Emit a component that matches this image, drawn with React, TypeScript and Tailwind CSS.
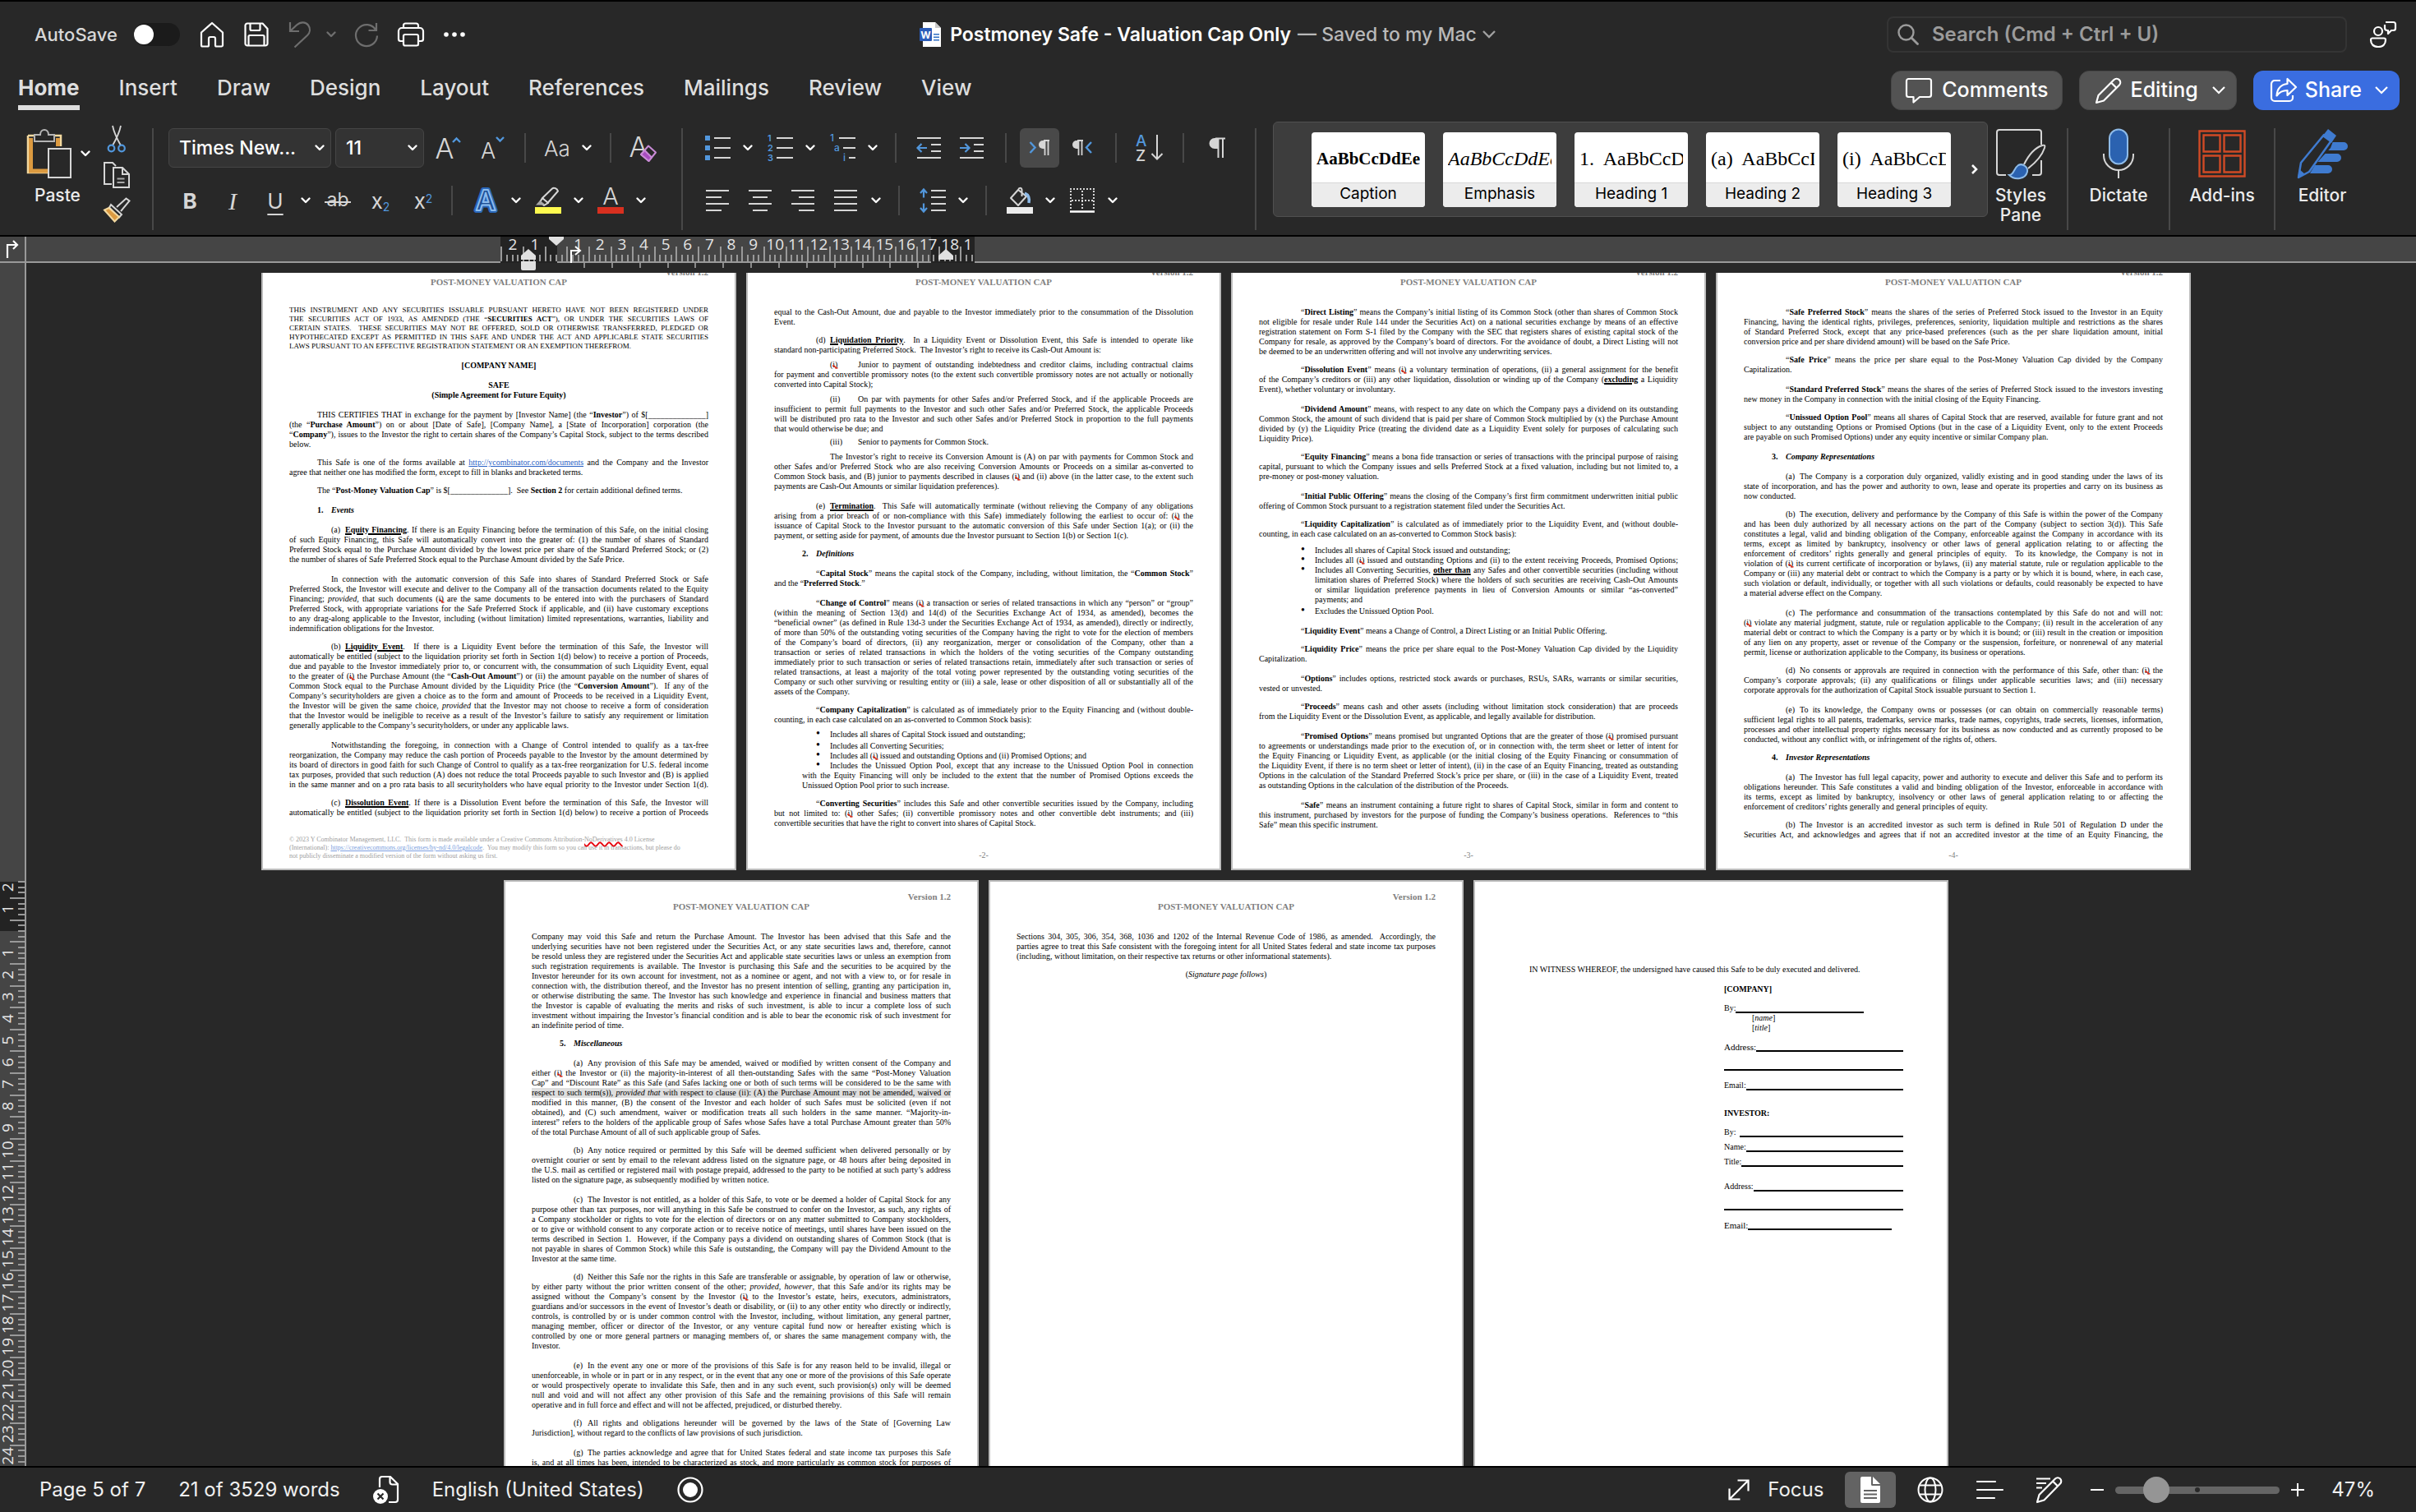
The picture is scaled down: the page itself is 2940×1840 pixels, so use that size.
import type { ReactNode } from "react";

interface Block {
  lines: string[];
  mt?: string;
  indent?: string;
  tag?: string;
  tagWidth?: string;
  center?: boolean;
  bullet?: boolean;
  hanging?: boolean;
  tight?: boolean;
  cont?: boolean;
  shaded?: number;
}

const PAGE_1: Block[] = [
  {
    mt: "-mt-[2px]",
    tight: true,
    lines: [
      "THIS INSTRUMENT AND ANY SECURITIES ISSUABLE PURSUANT HERETO HAVE NOT BEEN REGISTERED UNDER",
      "THE SECURITIES ACT OF 1933, AS AMENDED (THE “{b:SECURITIES ACT}”), OR UNDER THE SECURITIES LAWS OF",
      "CERTAIN STATES.  THESE SECURITIES MAY NOT BE OFFERED, SOLD OR OTHERWISE TRANSFERRED, PLEDGED OR",
      "HYPOTHECATED EXCEPT AS PERMITTED IN THIS SAFE AND UNDER THE ACT AND APPLICABLE STATE SECURITIES",
      "LAWS PURSUANT TO AN EFFECTIVE REGISTRATION STATEMENT OR AN EXEMPTION THEREFROM.",
    ],
  },
  { mt: "mt-3", center: true, lines: ["{b:[COMPANY NAME]}"] },
  { mt: "mt-3", center: true, lines: ["{b:SAFE}", "{b:(Simple Agreement for Future Equity)}"] },
  {
    mt: "mt-3",
    indent: "indent-[34px]",
    lines: [
      "THIS CERTIFIES THAT in exchange for the payment by [Investor Name] (the “{b:Investor}”) of $[______________]",
      "(the “{b:Purchase Amount}”) on or about [Date of Safe], [Company Name], a [State of Incorporation] corporation (the",
      "“{b:Company}”), issues to the Investor the right to certain shares of the Company’s Capital Stock, subject to the terms described",
      "below.",
    ],
  },
  {
    mt: "mt-[10px]",
    indent: "indent-[34px]",
    lines: [
      "This Safe is one of the forms available at {a:http://ycombinator.com/documents} and the Company and the Investor",
      "agree that neither one has modified the form, except to fill in blanks and bracketed terms.",
    ],
  },
  {
    mt: "mt-[10px]",
    indent: "indent-[34px]",
    lines: ["The “{b:Post-Money Valuation Cap}” is $[______________].  See {b:Section 2} for certain additional defined terms."],
  },
  { mt: "mt-3", indent: "indent-[34px]", tag: "{b:1.}", lines: ["{i:{b:Events}}"] },
  {
    mt: "mt-3",
    indent: "indent-[51px]",
    tag: "(a)",
    lines: [
      "{u:Equity Financing}. If there is an Equity Financing before the termination of this Safe, on the initial closing",
      "of such Equity Financing, this Safe will automatically convert into the greater of: (1) the number of shares of Standard",
      "Preferred Stock equal to the Purchase Amount divided by the lowest price per share of the Standard Preferred Stock; or (2)",
      "the number of shares of Safe Preferred Stock equal to the Purchase Amount divided by the Safe Price.",
    ],
  },
  {
    mt: "mt-3",
    indent: "indent-[51px]",
    lines: [
      "In connection with the automatic conversion of this Safe into shares of Standard Preferred Stock or Safe",
      "Preferred Stock, the Investor will execute and deliver to the Company all of the transaction documents related to the Equity",
      "Financing; {i:provided}, that such documents ({e:i)} are the same documents to be entered into with the purchasers of Standard",
      "Preferred Stock, with appropriate variations for the Safe Preferred Stock if applicable, and (ii) have customary exceptions",
      "to any drag-along applicable to the Investor, including (without limitation) limited representations, warranties, liability and",
      "indemnification obligations for the Investor.",
    ],
  },
  {
    mt: "mt-[10px]",
    indent: "indent-[51px]",
    tag: "(b)",
    lines: [
      "{u:Liquidity Event}.  If there is a Liquidity Event before the termination of this Safe, the Investor will",
      "automatically be entitled (subject to the liquidation priority set forth in Section 1(d) below) to receive a portion of Proceeds,",
      "due and payable to the Investor immediately prior to, or concurrent with, the consummation of such Liquidity Event, equal",
      "to the greater of ({e:i)} the Purchase Amount (the “{b:Cash-Out Amount}”) or (ii) the amount payable on the number of shares of",
      "Common Stock equal to the Purchase Amount divided by the Liquidity Price (the “{b:Conversion Amount}”).  If any of the",
      "Company’s securityholders are given a choice as to the form and amount of Proceeds to be received in a Liquidity Event,",
      "the Investor will be given the same choice, {i:provided} that the Investor may not choose to receive a form of consideration",
      "that the Investor would be ineligible to receive as a result of the Investor’s failure to satisfy any requirement or limitation",
      "generally applicable to the Company’s securityholders, or under any applicable laws.",
    ],
  },
  {
    mt: "mt-3",
    indent: "indent-[51px]",
    cont: true,
    lines: [
      "Notwithstanding the foregoing, in connection with a Change of Control intended to qualify as a tax-free",
      "reorganization, the Company may reduce the cash portion of Proceeds payable to the Investor by the amount determined by",
      "its board of directors in good faith for such Change of Control to qualify as a tax-free reorganization for U.S. federal income",
      "tax purposes, provided that such reduction (A) does not reduce the total Proceeds payable to such Investor and (B) is applied",
      "in the same manner and on a pro rata basis to all securityholders who have equal priority to the Investor under Section 1(d).",
    ],
  },
  {
    mt: "mt-[10px]",
    indent: "indent-[51px]",
    tag: "(c)",
    cont: true,
    lines: [
      "{u:Dissolution Event}. If there is a Dissolution Event before the termination of this Safe, the Investor will",
      "automatically be entitled (subject to the liquidation priority set forth in Section 1(d) below) to receive a portion of Proceeds",
    ],
  },
];

const PAGE_2: Block[] = [
  {
    lines: [
      "equal to the Cash-Out Amount, due and payable to the Investor immediately prior to the consummation of the Dissolution",
      "Event.",
    ],
  },
  {
    mt: "mt-[10px]",
    indent: "indent-[51px]",
    tag: "(d)",
    lines: [
      "{u:Liquidation Priority}.  In a Liquidity Event or Dissolution Event, this Safe is intended to operate like",
      "standard non-participating Preferred Stock.  The Investor’s right to receive its Cash-Out Amount is:",
    ],
  },
  {
    mt: "mt-[6px]",
    indent: "indent-[68px]",
    tag: "({e:i)}",
    tagWidth: "w-[34px]",
    lines: [
      "Junior to payment of outstanding indebtedness and creditor claims, including contractual claims",
      "for payment and convertible promissory notes (to the extent such convertible promissory notes are not actually or notionally",
      "converted into Capital Stock);",
    ],
  },
  {
    mt: "mt-[6px]",
    indent: "indent-[68px]",
    tag: "(ii)",
    tagWidth: "w-[34px]",
    lines: [
      "On par with payments for other Safes and/or Preferred Stock, and if the applicable Proceeds are",
      "insufficient to permit full payments to the Investor and such other Safes and/or Preferred Stock, the applicable Proceeds",
      "will be distributed pro rata to the Investor and such other Safes and/or Preferred Stock in proportion to the full payments",
      "that would otherwise be due; and",
    ],
  },
  { mt: "mt-1", indent: "indent-[68px]", tag: "(iii)", tagWidth: "w-[34px]", lines: ["Senior to payments for Common Stock."] },
  {
    mt: "mt-[6px]",
    indent: "indent-[68px]",
    lines: [
      "The Investor’s right to receive its Conversion Amount is (A) on par with payments for Common Stock and",
      "other Safes and/or Preferred Stock who are also receiving Conversion Amounts or Proceeds on a similar as-converted to",
      "Common Stock basis, and (B) junior to payments described in clauses ({e:i)} and (ii) above (in the latter case, to the extent such",
      "payments are Cash-Out Amounts or similar liquidation preferences).",
    ],
  },
  {
    mt: "mt-3",
    indent: "indent-[51px]",
    tag: "(e)",
    lines: [
      "{u:Termination}.  This Safe will automatically terminate (without relieving the Company of any obligations",
      "arising from a prior breach of or non-compliance with this Safe) immediately following the earliest to occur of: ({e:i)} the",
      "issuance of Capital Stock to the Investor pursuant to the automatic conversion of this Safe under Section 1(a); or (ii) the",
      "payment, or setting aside for payment, of amounts due the Investor pursuant to Section 1(b) or Section 1(c).",
    ],
  },
  { mt: "mt-[10px]", indent: "indent-[34px]", tag: "{b:2.}", lines: ["{i:{b:Definitions}}"] },
  {
    mt: "mt-3",
    indent: "indent-[51px]",
    lines: [
      "“{b:Capital Stock}” means the capital stock of the Company, including, without limitation, the “{b:Common Stock}”",
      "and the “{b:Preferred Stock}.”",
    ],
  },
  {
    mt: "mt-3",
    indent: "indent-[51px]",
    lines: [
      "“{b:Change of Control}” means ({e:i)} a transaction or series of related transactions in which any “person” or “group”",
      "(within the meaning of Section 13(d) and 14(d) of the Securities Exchange Act of 1934, as amended), becomes the",
      "“beneficial owner” (as defined in Rule 13d-3 under the Securities Exchange Act of 1934, as amended), directly or indirectly,",
      "of more than 50% of the outstanding voting securities of the Company having the right to vote for the election of members",
      "of the Company’s board of directors, (ii) any reorganization, merger or consolidation of the Company, other than a",
      "transaction or series of related transactions in which the holders of the voting securities of the Company outstanding",
      "immediately prior to such transaction or series of related transactions retain, immediately after such transaction or series of",
      "related transactions, at least a majority of the total voting power represented by the outstanding voting securities of the",
      "Company or such other surviving or resulting entity or (iii) a sale, lease or other disposition of all or substantially all of the",
      "assets of the Company.",
    ],
  },
  {
    mt: "mt-[10px]",
    indent: "indent-[51px]",
    lines: [
      "“{b:Company Capitalization}” is calculated as of immediately prior to the Equity Financing and (without double-",
      "counting, in each case calculated on an as-converted to Common Stock basis):",
    ],
  },
  { mt: "mt-[6px]", bullet: true, lines: ["Includes all shares of Capital Stock issued and outstanding;"] },
  { mt: "mt-[2px]", bullet: true, lines: ["Includes all Converting Securities;"] },
  { bullet: true, lines: ["Includes all ({e:i)} issued and outstanding Options and (ii) Promised Options; and"] },
  {
    bullet: true,
    lines: [
      "Includes the Unissued Option Pool, except that any increase to the Unissued Option Pool in connection",
      "with the Equity Financing will only be included to the extent that the number of Promised Options exceeds the",
      "Unissued Option Pool prior to such increase.",
    ],
  },
  {
    mt: "mt-[10px]",
    indent: "indent-[51px]",
    lines: [
      "“{b:Converting Securities}” includes this Safe and other convertible securities issued by the Company, including",
      "but not limited to: ({e:i)} other Safes; (ii) convertible promissory notes and other convertible debt instruments; and (iii)",
      "convertible securities that have the right to convert into shares of Capital Stock.",
    ],
  },
];

const PAGE_3: Block[] = [
  {
    indent: "indent-[51px]",
    lines: [
      "“{b:Direct Listing}” means the Company’s initial listing of its Common Stock (other than shares of Common Stock",
      "not eligible for resale under Rule 144 under the Securities Act) on a national securities exchange by means of an effective",
      "registration statement on Form S-1 filed by the Company with the SEC that registers shares of existing capital stock of the",
      "Company for resale, as approved by the Company’s board of directors. For the avoidance of doubt, a Direct Listing will not",
      "be deemed to be an underwritten offering and will not involve any underwriting services.",
    ],
  },
  {
    mt: "mt-[10px]",
    indent: "indent-[51px]",
    lines: [
      "“{b:Dissolution Event}” means ({e:i)} a voluntary termination of operations, (ii) a general assignment for the benefit",
      "of the Company’s creditors or (iii) any other liquidation, dissolution or winding up of the Company ({u:excluding} a Liquidity",
      "Event), whether voluntary or involuntary.",
    ],
  },
  {
    mt: "mt-3",
    indent: "indent-[51px]",
    lines: [
      "“{b:Dividend Amount}” means, with respect to any date on which the Company pays a dividend on its outstanding",
      "Common Stock, the amount of such dividend that is paid per share of Common Stock multiplied by (x) the Purchase Amount",
      "divided by (y) the Liquidity Price (treating the dividend date as a Liquidity Event solely for purposes of calculating such",
      "Liquidity Price).",
    ],
  },
  {
    mt: "mt-[10px]",
    indent: "indent-[51px]",
    lines: [
      "“{b:Equity Financing}” means a bona fide transaction or series of transactions with the principal purpose of raising",
      "capital, pursuant to which the Company issues and sells Preferred Stock at a fixed valuation, including but not limited to, a",
      "pre-money or post-money valuation.",
    ],
  },
  {
    mt: "mt-3",
    indent: "indent-[51px]",
    lines: [
      "“{b:Initial Public Offering}” means the closing of the Company’s first firm commitment underwritten initial public",
      "offering of Common Stock pursuant to a registration statement filed under the Securities Act.",
    ],
  },
  {
    mt: "mt-[10px]",
    indent: "indent-[51px]",
    lines: [
      "“{b:Liquidity Capitalization}” is calculated as of immediately prior to the Liquidity Event, and (without double-",
      "counting, in each case calculated on an as-converted to Common Stock basis):",
    ],
  },
  { mt: "mt-2", bullet: true, hanging: true, lines: ["Includes all shares of Capital Stock issued and outstanding;"] },
  {
    bullet: true,
    hanging: true,
    cont: true,
    lines: ["Includes all ({e:i)} issued and outstanding Options and (ii) to the extent receiving Proceeds, Promised Options;"],
  },
  {
    bullet: true,
    hanging: true,
    lines: [
      "Includes all Converting Securities, {u:other than} any Safes and other convertible securities (including without",
      "limitation shares of Preferred Stock) where the holders of such securities are receiving Cash-Out Amounts",
      "or similar liquidation preference payments in lieu of Conversion Amounts or similar “as-converted”",
      "payments; and",
    ],
  },
  { mt: "mt-[2px]", bullet: true, hanging: true, lines: ["Excludes the Unissued Option Pool."] },
  {
    mt: "mt-3",
    indent: "indent-[51px]",
    lines: ["“{b:Liquidity Event}” means a Change of Control, a Direct Listing or an Initial Public Offering."],
  },
  {
    mt: "mt-[10px]",
    indent: "indent-[51px]",
    lines: [
      "“{b:Liquidity Price}” means the price per share equal to the Post-Money Valuation Cap divided by the Liquidity",
      "Capitalization.",
    ],
  },
  {
    mt: "mt-3",
    indent: "indent-[51px]",
    lines: [
      "“{b:Options}” includes options, restricted stock awards or purchases, RSUs, SARs, warrants or similar securities,",
      "vested or unvested.",
    ],
  },
  {
    mt: "mt-[10px]",
    indent: "indent-[51px]",
    lines: [
      "“{b:Proceeds}” means cash and other assets (including without limitation stock consideration) that are proceeds",
      "from the Liquidity Event or the Dissolution Event, as applicable, and legally available for distribution.",
    ],
  },
  {
    mt: "mt-3",
    indent: "indent-[51px]",
    lines: [
      "“{b:Promised Options}” means promised but ungranted Options that are the greater of those ({e:i)} promised pursuant",
      "to agreements or understandings made prior to the execution of, or in connection with, the term sheet or letter of intent for",
      "the Equity Financing or Liquidity Event, as applicable (or the initial closing of the Equity Financing or consummation of",
      "the Liquidity Event, if there is no term sheet or letter of intent), (ii) in the case of an Equity Financing, treated as outstanding",
      "Options in the calculation of the Standard Preferred Stock’s price per share, or (iii) in the case of a Liquidity Event, treated",
      "as outstanding Options in the calculation of the distribution of the Proceeds.",
    ],
  },
  {
    mt: "mt-3",
    indent: "indent-[51px]",
    lines: [
      "“{b:Safe}” means an instrument containing a future right to shares of Capital Stock, similar in form and content to",
      "this instrument, purchased by investors for the purpose of funding the Company’s business operations.  References to “this",
      "Safe” mean this specific instrument.",
    ],
  },
];

const PAGE_4: Block[] = [
  {
    indent: "indent-[51px]",
    lines: [
      "“{b:Safe Preferred Stock}” means the shares of the series of Preferred Stock issued to the Investor in an Equity",
      "Financing, having the identical rights, privileges, preferences, seniority, liquidation multiple and restrictions as the shares",
      "of Standard Preferred Stock, except that any price-based preferences (such as the per share liquidation amount, initial",
      "conversion price and per share dividend amount) will be based on the Safe Price.",
    ],
  },
  {
    mt: "mt-[10px]",
    indent: "indent-[51px]",
    lines: [
      "“{b:Safe Price}” means the price per share equal to the Post-Money Valuation Cap divided by the Company",
      "Capitalization.",
    ],
  },
  {
    mt: "mt-3",
    indent: "indent-[51px]",
    lines: [
      "“{b:Standard Preferred Stock}” means the shares of the series of Preferred Stock issued to the investors investing",
      "new money in the Company in connection with the initial closing of the Equity Financing.",
    ],
  },
  {
    mt: "mt-[10px]",
    indent: "indent-[51px]",
    lines: [
      "“{b:Unissued Option Pool}” means all shares of Capital Stock that are reserved, available for future grant and not",
      "subject to any outstanding Options or Promised Options (but in the case of a Liquidity Event, only to the extent Proceeds",
      "are payable on such Promised Options) under any equity incentive or similar Company plan.",
    ],
  },
  { mt: "mt-3", indent: "indent-[34px]", tag: "{b:3.}", lines: ["{i:{b:Company Representations}}"] },
  {
    mt: "mt-3",
    indent: "indent-[51px]",
    tag: "(a)",
    lines: [
      "The Company is a corporation duly organized, validly existing and in good standing under the laws of its",
      "state of incorporation, and has the power and authority to own, lease and operate its properties and carry on its business as",
      "now conducted.",
    ],
  },
  {
    mt: "mt-[10px]",
    indent: "indent-[51px]",
    tag: "(b)",
    lines: [
      "The execution, delivery and performance by the Company of this Safe is within the power of the Company",
      "and has been duly authorized by all necessary actions on the part of the Company (subject to section 3(d)). This Safe",
      "constitutes a legal, valid and binding obligation of the Company, enforceable against the Company in accordance with its",
      "terms, except as limited by bankruptcy, insolvency or other laws of general application relating to or affecting the",
      "enforcement of creditors’ rights generally and general principles of equity.  To its knowledge, the Company is not in",
      "violation of ({e:i)} its current certificate of incorporation or bylaws, (ii) any material statute, rule or regulation applicable to the",
      "Company or (iii) any material debt or contract to which the Company is a party or by which it is bound, where, in each case,",
      "such violation or default, individually, or together with all such violations or defaults, could reasonably be expected to have",
      "a material adverse effect on the Company.",
    ],
  },
  {
    mt: "mt-3",
    indent: "indent-[51px]",
    tag: "(c)",
    lines: [
      "The performance and consummation of the transactions contemplated by this Safe do not and will not:",
      "({e:i)} violate any material judgment, statute, rule or regulation applicable to the Company; (ii) result in the acceleration of any",
      "material debt or contract to which the Company is a party or by which it is bound; or (iii) result in the creation or imposition",
      "of any lien on any property, asset or revenue of the Company or the suspension, forfeiture, or nonrenewal of any material",
      "permit, license or authorization applicable to the Company, its business or operations.",
    ],
  },
  {
    mt: "mt-[10px]",
    indent: "indent-[51px]",
    tag: "(d)",
    lines: [
      "No consents or approvals are required in connection with the performance of this Safe, other than: ({e:i)} the",
      "Company’s corporate approvals; (ii) any qualifications or filings under applicable securities laws; and (iii) necessary",
      "corporate approvals for the authorization of Capital Stock issuable pursuant to Section 1.",
    ],
  },
  {
    mt: "mt-3",
    indent: "indent-[51px]",
    tag: "(e)",
    lines: [
      "To its knowledge, the Company owns or possesses (or can obtain on commercially reasonable terms)",
      "sufficient legal rights to all patents, trademarks, service marks, trade names, copyrights, trade secrets, licenses, information,",
      "processes and other intellectual property rights necessary for its business as now conducted and as currently proposed to be",
      "conducted, without any conflict with, or infringement of the rights of, others.",
    ],
  },
  { mt: "mt-[10px]", indent: "indent-[34px]", tag: "{b:4.}", lines: ["{i:{b:Investor Representations}}"] },
  {
    mt: "mt-3",
    indent: "indent-[51px]",
    tag: "(a)",
    lines: [
      "The Investor has full legal capacity, power and authority to execute and deliver this Safe and to perform its",
      "obligations hereunder. This Safe constitutes a valid and binding obligation of the Investor, enforceable in accordance with",
      "its terms, except as limited by bankruptcy, insolvency or other laws of general application relating to or affecting the",
      "enforcement of creditors’ rights generally and general principles of equity.",
    ],
  },
  {
    mt: "mt-[10px]",
    indent: "indent-[51px]",
    tag: "(b)",
    cont: true,
    lines: [
      "The Investor is an accredited investor as such term is defined in Rule 501 of Regulation D under the",
      "Securities Act, and acknowledges and agrees that if not an accredited investor at the time of an Equity Financing, the",
    ],
  },
];

const PAGE_5: Block[] = [
  {
    lines: [
      "Company may void this Safe and return the Purchase Amount. The Investor has been advised that this Safe and the",
      "underlying securities have not been registered under the Securities Act, or any state securities laws and, therefore, cannot",
      "be resold unless they are registered under the Securities Act and applicable state securities laws or unless an exemption from",
      "such registration requirements is available. The Investor is purchasing this Safe and the securities to be acquired by the",
      "Investor hereunder for its own account for investment, not as a nominee or agent, and not with a view to, or for resale in",
      "connection with, the distribution thereof, and the Investor has no present intention of selling, granting any participation in,",
      "or otherwise distributing the same. The Investor has such knowledge and experience in financial and business matters that",
      "the Investor is capable of evaluating the merits and risks of such investment, is able to incur a complete loss of such",
      "investment without impairing the Investor’s financial condition and is able to bear the economic risk of such investment for",
      "an indefinite period of time.",
    ],
  },
  { mt: "mt-[10px]", indent: "indent-[34px]", tag: "{b:5.}", lines: ["{i:{b:Miscellaneous}}"] },
  {
    mt: "mt-3",
    indent: "indent-[51px]",
    tag: "(a)",
    shaded: 3,
    lines: [
      "Any provision of this Safe may be amended, waived or modified by written consent of the Company and",
      "either ({e:i)} the Investor or (ii) the majority-in-interest of all then-outstanding Safes with the same “Post-Money Valuation",
      "Cap” and “Discount Rate” as this Safe (and Safes lacking one or both of such terms will be considered to be the same with",
      "respect to such term(s)), {i:provided that} with respect to clause (ii): (A) the Purchase Amount may not be amended, waived or",
      "modified in this manner, (B) the consent of the Investor and each holder of such Safes must be solicited (even if not",
      "obtained), and (C) such amendment, waiver or modification treats all such holders in the same manner. “Majority-in-",
      "interest” refers to the holders of the applicable group of Safes whose Safes have a total Purchase Amount greater than 50%",
      "of the total Purchase Amount of all of such applicable group of Safes.",
    ],
  },
  {
    mt: "mt-[10px]",
    indent: "indent-[51px]",
    tag: "(b)",
    lines: [
      "Any notice required or permitted by this Safe will be deemed sufficient when delivered personally or by",
      "overnight courier or sent by email to the relevant address listed on the signature page, or 48 hours after being deposited in",
      "the U.S. mail as certified or registered mail with postage prepaid, addressed to the party to be notified at such party’s address",
      "listed on the signature page, as subsequently modified by written notice.",
    ],
  },
  {
    mt: "mt-3",
    indent: "indent-[51px]",
    tag: "(c)",
    lines: [
      "The Investor is not entitled, as a holder of this Safe, to vote or be deemed a holder of Capital Stock for any",
      "purpose other than tax purposes, nor will anything in this Safe be construed to confer on the Investor, as such, any rights of",
      "a Company stockholder or rights to vote for the election of directors or on any matter submitted to Company stockholders,",
      "or to give or withhold consent to any corporate action or to receive notice of meetings, until shares have been issued on the",
      "terms described in Section 1.  However, if the Company pays a dividend on outstanding shares of Common Stock (that is",
      "not payable in shares of Common Stock) while this Safe is outstanding, the Company will pay the Dividend Amount to the",
      "Investor at the same time.",
    ],
  },
  {
    mt: "mt-[10px]",
    indent: "indent-[51px]",
    tag: "(d)",
    lines: [
      "Neither this Safe nor the rights in this Safe are transferable or assignable, by operation of law or otherwise,",
      "by either party without the prior written consent of the other; {i:provided, however}, that this Safe and/or its rights may be",
      "assigned without the Company’s consent by the Investor ({e:i)} to the Investor’s estate, heirs, executors, administrators,",
      "guardians and/or successors in the event of Investor’s death or disability, or (ii) to any other entity who directly or indirectly,",
      "controls, is controlled by or is under common control with the Investor, including, without limitation, any general partner,",
      "managing member, officer or director of the Investor, or any venture capital fund now or hereafter existing which is",
      "controlled by one or more general partners or managing members of, or shares the same management company with, the",
      "Investor.",
    ],
  },
  {
    mt: "mt-3",
    indent: "indent-[51px]",
    tag: "(e)",
    lines: [
      "In the event any one or more of the provisions of this Safe is for any reason held to be invalid, illegal or",
      "unenforceable, in whole or in part or in any respect, or in the event that any one or more of the provisions of this Safe operate",
      "or would prospectively operate to invalidate this Safe, then and in any such event, such provision(s) only will be deemed",
      "null and void and will not affect any other provision of this Safe and the remaining provisions of this Safe will remain",
      "operative and in full force and effect and will not be affected, prejudiced, or disturbed thereby.",
    ],
  },
  {
    mt: "mt-[10px]",
    indent: "indent-[51px]",
    tag: "(f)",
    lines: [
      "All rights and obligations hereunder will be governed by the laws of the State of [Governing Law",
      "Jurisdiction], without regard to the conflicts of law provisions of such jurisdiction.",
    ],
  },
  {
    mt: "mt-3",
    indent: "indent-[51px]",
    tag: "(g)",
    cont: true,
    lines: [
      "The parties acknowledge and agree that for United States federal and state income tax purposes this Safe",
      "is, and at all times has been, intended to be characterized as stock, and more particularly as common stock for purposes of",
    ],
  },
];

const PAGE_6: Block[] = [
  {
    lines: [
      "Sections 304, 305, 306, 354, 368, 1036 and 1202 of the Internal Revenue Code of 1986, as amended.  Accordingly, the",
      "parties agree to treat this Safe consistent with the foregoing intent for all United States federal and state income tax purposes",
      "(including, without limitation, on their respective tax returns or other informational statements).",
    ],
  },
  { mt: "mt-[10px]", center: true, lines: ["({i:Signature page follows})"] },
];

// {b:bold} {i:italic} {u:bold underlined} {e:proofing mark} {a:link}
function rich(text: string): ReactNode[] {
  return text.split(/(\{\w:(?:\{\w:[^}]*\}|[^{}])*\})/).map((part, i) => {
    const m = part.match(/^\{(\w):(.*)\}$/);
    if (!m) return part.replace(/ {2}/g, "\u00a0 ");
    const inner = rich(m[2]);
    switch (m[1]) {
      case "b":
        return <b key={i}>{inner}</b>;
      case "i":
        return <i key={i}>{inner}</i>;
      case "u":
        return <b key={i} className="underline decoration-2 underline-offset-1">{inner}</b>;
      case "e":
        return (
          <span key={i} className="relative">
            {inner}
            <svg width="7" height="5" viewBox="0 0 7 5" className="absolute bottom-0 left-0" aria-hidden="true">
              <path d="M0 1l2 .2L4.500 4l2-.2" stroke="#dc2a1c" strokeWidth="1.600" fill="none" />
            </svg>
          </span>
        );
      default:
        return <a key={i} href={m[2]} className="text-[#2b63c6] underline">{inner}</a>;
    }
  });
}

function Paragraph({ block }: { block: Block }) {
  const { lines, mt = "", indent = "", tag, tagWidth = "w-[17px]", center, bullet, hanging, tight, cont, shaded } = block;
  const pad = bullet ? (hanging ? "pl-[68px]" : "pl-[34px]") : "";
  return (
    <p className={`${mt} ${pad} ${tight ? "text-[9px] leading-[11px]" : ""} ${center ? "text-center" : ""}`}>
      {lines.map((line, i) => {
        const justify = !center && (cont || i < lines.length - 1);
        return (
          <span
            key={i}
            className={`block whitespace-nowrap ${i === 0 ? indent : ""} ${justify ? "text-justify [text-align-last:justify]" : ""} ${shaded === i ? "bg-[#dedede]" : ""}`}
          >
            {bullet && i === 0 && (
              <span className={`inline-block w-[17px] text-left text-[14px] leading-[10px] [text-align-last:left] ${hanging ? "-ml-[17px]" : "ml-[17px]"}`}>•</span>
            )}
            {tag && i === 0 && <span className={`inline-block indent-0 text-left [text-align-last:left] ${tagWidth}`}>{rich(tag)}</span>}
            {rich(line)}
          </span>
        );
      })}
    </p>
  );
}

function Page({ blocks, footer, children }: { blocks?: Block[]; footer?: ReactNode; children?: ReactNode }) {
  return (
    <article className="flex min-h-[748px] w-[578px] shrink-0 flex-col border-2 border-[#bcbcbc] bg-white px-8 pt-3 pb-[10px] font-['Liberation_Serif',serif] text-[10px] leading-[12px] text-black">
      {blocks && (
        <>
          <header className="mb-[25px] text-[11px] font-bold text-[#808080]">
            <p className="text-right">Version 1.2</p>
            <p className="text-center">POST-MONEY VALUATION CAP</p>
          </header>
          {blocks.map((b, i) => (
            <Paragraph key={i} block={b} />
          ))}
        </>
      )}
      {children}
      {footer && <footer className="mt-auto text-center text-[#808080]">{footer}</footer>}
    </article>
  );
}

function Blank({ label, mt, big, width = "w-full" }: { label?: string; mt: string; big?: boolean; width?: string }) {
  return (
    <div className={`flex h-3 items-end ${mt} ${width}`}>
      {label && <span className={big ? "text-[11px]" : ""}>{label}</span>}
      <span className="flex-1 border-b-2 border-black" />
    </div>
  );
}

function SignaturePage() {
  return (
    <Page>
      <p className="mt-[89px] pl-[34px]">IN WITNESS WHEREOF, the undersigned have caused this Safe to be duly executed and delivered.</p>
      <div className="ml-[271px] w-[218px]">
        <p className="mt-3 font-bold">[COMPANY]</p>
        <Blank label="By:" mt="mt-[11px]" width="w-[170px]" />
        <p className="pl-[34px]">[<i>name</i>]</p>
        <p className="pl-[34px]">[<i>title</i>]</p>
        <Blank label="Address:" mt="mt-[11px]" big />
        <Blank mt="mt-[11px]" />
        <Blank label="Email:" mt="mt-3" />
        <p className="mt-[22px] font-bold">INVESTOR:</p>
        <Blank label={"By:\u00a0\u00a0"} mt="mt-[11px]" />
        <Blank label="Name:" mt="mt-[6px]" />
        <Blank label="Title:" mt="mt-[6px]" />
        <Blank label="Address:" mt="mt-[18px]" />
        <Blank mt="mt-[11px]" />
        <Blank label="Email:" mt="mt-3" big width="w-[204px]" />
      </div>
    </Page>
  );
}

/* ---------- icons ---------- */

interface IconProps {
  w: number;
  h: number;
  children: ReactNode;
  className?: string;
}

function Icon({ w, h, children, className = "" }: IconProps) {
  return (
    <svg width={w} height={h} viewBox={`0 0 ${w} ${h}`} fill="none" stroke="#d6d6d6" strokeWidth="2" className={`shrink-0 overflow-visible ${className}`} aria-hidden="true">
      {children}
    </svg>
  );
}

const BLUE = "#5297dc";

function Chevron({ className = "", color = "#ffffff" }: { className?: string; color?: string }) {
  return (
    <Icon w={12} h={8} className={className}>
      <path d="M1.5 1.5 6 6l4.500-4.500" stroke={color} strokeWidth="2.400" strokeLinecap="round" strokeLinejoin="round" />
    </Icon>
  );
}

function Lines({ rows }: { rows: [number, number][] }) {
  return (
    <Icon w={28} h={28}>
      {rows.map(([x1, x2], i) => (
        <path key={i} d={`M${x1} ${2 + i * 8}H${x2}`} />
      ))}
    </Icon>
  );
}

const HomeIcon = () => (
  <Icon w={30} h={32}>
    <path d="M2 13.500 15 2l13 11.500V29a1.500 1.500 0 0 1-1.500 1.500H20.500A1.500 1.500 0 0 1 19 29v-8a2 2 0 0 0-2-2h-4a2 2 0 0 0-2 2v8a1.500 1.500 0 0 1-1.500 1.500H3.500A1.500 1.500 0 0 1 2 29Z" stroke="#fff" strokeWidth="2.200" strokeLinejoin="round" />
  </Icon>
);

const SaveIcon = () => (
  <Icon w={30} h={30}>
    <g stroke="#fff" strokeWidth="2.200" strokeLinejoin="round">
      <path d="M4 1.500h18.500L28.500 8v18a2.500 2.500 0 0 1-2.500 2.500H4A2.500 2.500 0 0 1 1.500 26V4A2.500 2.500 0 0 1 4 1.500Z" />
      <path d="M7.500 2v6.500A1.500 1.500 0 0 0 9 10h9a1.500 1.500 0 0 0 1.500-1.500V2M5.500 28V17.500A1.500 1.500 0 0 1 7 16h16a1.500 1.500 0 0 1 1.500 1.500V28" />
    </g>
  </Icon>
);

const UndoIcon = () => (
  <Icon w={28} h={34}>
    <path d="M2 2v11h11M2.500 12.500 10 5.500C15 1 21 1.500 24 5.500c3 4 2.500 9-1 12.500L7.500 32.500" stroke="#6e6e6e" strokeWidth="2.200" />
  </Icon>
);

const RedoIcon = () => (
  <Icon w={30} h={32}>
    <path d="M27 2v9H17.500M26.500 11A13 13 0 1 0 28 17.500" stroke="#6e6e6e" strokeWidth="2.200" />
  </Icon>
);

const PrintIcon = () => (
  <Icon w={34} h={30}>
    <g stroke="#fff" strokeWidth="2.200" strokeLinejoin="round">
      <path d="M8 8V4a2.500 2.500 0 0 1 2.500-2.500h13A2.500 2.500 0 0 1 26 4v4" />
      <path d="M8 23H4.500A2.500 2.500 0 0 1 2 20.500V11a4 4 0 0 1 4-4h22a4 4 0 0 1 4 4v9.500A2.500 2.500 0 0 1 29.500 23H26" />
      <path d="M10 15h14a2 2 0 0 1 2 2v9.500a2 2 0 0 1-2 2H10a2 2 0 0 1-2-2V17a2 2 0 0 1 2-2Z" />
    </g>
  </Icon>
);

const DotsIcon = () => (
  <Icon w={28} h={8}>
    <g fill="#fff" stroke="none">
      <circle cx="4" cy="4" r="2.800" />
      <circle cx="14" cy="4" r="2.800" />
      <circle cx="24" cy="4" r="2.800" />
    </g>
  </Icon>
);

const WordDocIcon = () => (
  <Icon w={27} h={30}>
    <g stroke="none">
      <path d="M4 0h15l7 7v23H4Z" fill="#fff" />
      <path d="M19 0l7 7h-7Z" fill="#c9c9c9" />
      <path d="M17 14h7v1.500h-7zM17 17.500h7V19h-7zM17 21h7v1.500h-7z" fill="#2f6fc4" />
      <rect x="0" y="7" width="15" height="16" rx="1" fill="#2b5cb8" />
      <text x="7.500" y="19.500" textAnchor="middle" fontSize="12" fontWeight="700" fontFamily="Inter, sans-serif" fill="#fff">W</text>
    </g>
  </Icon>
);

const SearchIcon = () => (
  <Icon w={26} h={26}>
    <circle cx="10.500" cy="10.500" r="9" stroke="#9b9b9b" strokeWidth="2.400" />
    <path d="m17 17 7.500 7.500" stroke="#9b9b9b" strokeWidth="2.800" strokeLinecap="round" />
  </Icon>
);

const PersonIcon = () => (
  <Icon w={34} h={34}>
    <g stroke="#fff" strokeWidth="2.200" strokeLinejoin="round">
      <circle cx="11" cy="13" r="5" />
      <path d="M3.500 21.500h14.500a2 2 0 0 1 2 2c0 5-3 8.500-9 8.500s-9-3.500-9-8.500a2 2 0 0 1 1.500-2Z" />
      <path d="M20 2h9.500A2.500 2.500 0 0 1 32 4.500v5a2.500 2.500 0 0 1-2.500 2.500H27l-4 4v-4h-1a3 3 0 0 1-3-3V5" />
    </g>
  </Icon>
);

const CommentIcon = () => (
  <Icon w={34} h={32}>
    <path d="M4.500 2h25A2.500 2.500 0 0 1 32 4.500v17a2.500 2.500 0 0 1-2.500 2.500H18l-7.500 6.500V24h-6A2.500 2.500 0 0 1 2 21.500v-17A2.500 2.500 0 0 1 4.500 2Z" stroke="#fff" strokeWidth="2.200" strokeLinejoin="round" />
  </Icon>
);

const PencilIcon = () => (
  <Icon w={34} h={34}>
    <path d="m2 32 2.500-9L23.500 4a4.600 4.600 0 0 1 6.500 6.500L11 29.500Zm18-24.500 6.500 6.500" stroke="#fff" strokeWidth="2.200" strokeLinejoin="round" />
  </Icon>
);

const ShareIcon = () => (
  <Icon w={34} h={32}>
    <g stroke="#fff" strokeWidth="2.200" strokeLinejoin="round">
      <path d="M13 4H6a4 4 0 0 0-4 4v17a4 4 0 0 0 4 4h18a4 4 0 0 0 4-4v-3" />
      <path d="M21.500 2v6C13 9 9 14 8.500 22.500 12 17.500 16 16 21.500 16v6L32 12Z" />
    </g>
  </Icon>
);

const PasteIcon = () => (
  <Icon w={56} h={62}>
    <path d="M2 9h40v13M26 54H2V9" stroke="#f3d9a0" strokeWidth="2.500" />
    <path d="M5.500 12v40H26M38.500 12v10" stroke="#dc9a40" strokeWidth="5" />
    <path d="M10 16V8h7c0-8 10-8 10 0h7v8Z" fill="#282828" stroke="#b4b4b4" />
    <rect x="27" y="25" width="27" height="35" fill="#282828" stroke="#d6d6d6" />
  </Icon>
);

const CutIcon = () => (
  <Icon w={24} h={34}>
    <path d="M7 1c2 10 6 17 10 24M17 1C15 11 11 18 7 25" strokeWidth="1.800" />
    <circle cx="5.500" cy="28.500" r="3.800" stroke={BLUE} strokeWidth="2.200" />
    <circle cx="18" cy="28.500" r="3.800" stroke={BLUE} strokeWidth="2.200" />
  </Icon>
);

const CopyIcon = () => (
  <Icon w={34} h={34}>
    <path d="M11 28H2V2h10l4 4M13 8h11l8 8v16H13ZM24 8v8h8" />
    <path d="M17.500 21.500h9M17.500 26h9" stroke="#a8a8a8" />
  </Icon>
);

const BrushIcon = () => (
  <Icon w={34} h={32}>
    <path d="M17 12 28.500 1.500l4 3L22 17" />
    <path d="m10 9 13 12-3 3.500L8 12.500Z" fill="#282828" />
    <path d="M7.500 13 2 15.500l12.500 14L20 24Z" fill="#dc9a40" stroke="#f3d9a0" />
  </Icon>
);

const GrowIcon = ({ down = false }: { down?: boolean }) => (
  <Icon w={31} h={32}>
    <g stroke="none" fill="#d6d6d6">
      <text x={down ? 9 : 11} y="29" textAnchor="middle" fontSize={down ? 27 : 34} fontWeight="300" fontFamily="Inter, sans-serif">A</text>
    </g>
    <path d={down ? "m19 3 4.500 4.500L28 3" : "m21 9 4.500-4.500L30 9"} stroke={BLUE} strokeWidth="2.400" />
  </Icon>
);

const ClearFormatIcon = () => (
  <Icon w={34} h={36}>
    <text x="11" y="29" textAnchor="middle" fontSize="34" fontWeight="300" fontFamily="Inter, sans-serif" fill="#d6d6d6" stroke="none">A</text>
    <path d="m14 26 9-10.500 9 8L23.500 34Z" fill="#282828" stroke="#c98bd6" strokeLinejoin="round" />
    <path d="m14 26 4.500-5 8.500 8.500-3.500 4.500Z" fill="#a84cc0" stroke="#c98bd6" strokeLinejoin="round" />
  </Icon>
);

const BulletsIcon = () => (
  <Icon w={31} h={30}>
    <path d="M0 3h6M0 15h6M0 27h6" stroke={BLUE} strokeWidth="6" />
    <path d="M11 3h20M11 15h20M11 27h20" />
  </Icon>
);

const NumberedIcon = () => (
  <Icon w={31} h={34}>
    <g stroke="none" fill={BLUE} fontSize="11" fontWeight="600" fontFamily="Inter, sans-serif">
      <text x="0" y="9">1</text>
      <text x="0" y="21">2</text>
      <text x="0" y="33">3</text>
    </g>
    <path d="M11 5h20M11 17h20M11 29h20" />
  </Icon>
);

const MultilevelIcon = () => (
  <Icon w={31} h={34}>
    <g stroke="none" fill={BLUE} fontSize="12" fontWeight="500" fontFamily="Inter, sans-serif">
      <text x="0" y="9">1</text>
      <text x="5" y="21">a</text>
      <text x="16" y="33">i</text>
    </g>
    <path d="M11 5h20M16 17h15M23 29h8" />
  </Icon>
);

const IndentIcon = ({ right = false }: { right?: boolean }) => (
  <Icon w={30} h={28}>
    <path d="M0 2h29M17 10h12M17 18h12M0 26h29" />
    <path d={right ? "M0 14h11M6.500 9l5 5-5 5" : "M12 14H1M5.500 9l-5 5 5 5"} stroke={BLUE} strokeWidth="2.200" />
  </Icon>
);

const DirectionIcon = ({ rtl = false }: { rtl?: boolean }) => (
  <Icon w={26} h={24}>
    <path d={rtl ? "M24 5l-6 6.500 6 6.500" : "M1.500 5l6 6.500-6 6.500"} stroke={BLUE} strokeWidth="2.400" />
    <g transform={rtl ? "translate(-11 0)" : ""}>
      <path d="M18 3h7M19.500 3v18M23.500 3v18" strokeWidth="1.800" />
      <path d="M19 3h-2a5 5 0 0 0 0 10h2Z" fill="#d6d6d6" stroke="none" />
    </g>
  </Icon>
);

const SortIcon = () => (
  <Icon w={34} h={36}>
    <g stroke="none" fontSize="19" fontWeight="500" fontFamily="Inter, sans-serif">
      <text x="0" y="16" fill={BLUE}>A</text>
      <text x="0" y="34" fill="#d6d6d6">Z</text>
    </g>
    <path d="M26 2v29M19.500 25l6.500 6.500 6.500-6.500" />
  </Icon>
);

const PilcrowIcon = () => (
  <Icon w={22} h={26}>
    <path d="M9 1.500h12M12.500 1.500V25M18 1.500V25" />
    <path d="M12 1H8a6.500 6.500 0 0 0 0 13h4Z" fill="#d6d6d6" stroke="none" />
  </Icon>
);

const StrikeIcon = () => (
  <Icon w={34} h={26}>
    <text x="17" y="20" textAnchor="middle" fontSize="23" fontFamily="Inter, sans-serif" fill="#d6d6d6" stroke="none">ab</text>
    <path d="M1 15h32" />
  </Icon>
);

const TextEffectsIcon = () => (
  <Icon w={34} h={34}>
    <g fontFamily="Inter, sans-serif" fontSize="34" fontWeight="600" strokeLinejoin="round">
      <text x="17" y="29" textAnchor="middle" stroke="#2a67b8" strokeWidth="6" paintOrder="stroke" fill="#7fb2e8">A</text>
      <text x="17" y="29" textAnchor="middle" stroke="#8cbcee" strokeWidth="2" fill="#1f4f94">A</text>
    </g>
  </Icon>
);

const HighlightIcon = () => (
  <Icon w={34} h={34}>
    <path d="M10 14 22 2.500c2-2 6 0 7 3L16.500 20" strokeLinejoin="round" />
    <path d="m10 14-3 5 5 4 5-3Z" strokeLinejoin="round" />
    <path d="m7 17-5 5.500h9l2-1Z" fill="#a8a8a8" stroke="none" />
    <rect x="1" y="25" width="32" height="8" fill="#fdf94f" stroke="none" />
  </Icon>
);

const FontColorIcon = () => (
  <Icon w={34} h={34}>
    <text x="17" y="22" textAnchor="middle" fontSize="29" fontWeight="300" fontFamily="Inter, sans-serif" fill="#d6d6d6" stroke="none">A</text>
    <rect x="1" y="25" width="32" height="8" fill="#d8301f" stroke="none" />
  </Icon>
);

const LineSpacingIcon = () => (
  <Icon w={32} h={30}>
    <path d="M14 3h18M14 11h18M14 19h18M14 27h18" />
    <path d="M5 1.500v10M1 6l4-4.500L9 6M5 18.500v10M1 24l4 4.500L9 24" stroke={BLUE} strokeWidth="2.200" />
  </Icon>
);

const FillIcon = () => (
  <Icon w={34} h={34}>
    <path d="M15 4 6 14l9 9L25 12Zm0 0c1-3 4-3 4.500 0v8" strokeLinejoin="round" />
    <path d="M23 8c5 2 6 6 5 12" stroke="#8ebbe8" strokeWidth="3.500" />
    <rect x="1" y="25" width="32" height="8" fill="#ececec" stroke="none" />
  </Icon>
);

const BordersIcon = () => (
  <Icon w={32} h={32}>
    <path d="M1 2h30M2 4v24M30 4v24M16 4v24M3 16h26" strokeDasharray="2 2" />
    <path d="M1 29.500h30" stroke="#fff" strokeWidth="2.500" />
  </Icon>
);

const StylesPaneIcon = () => (
  <Icon w={62} h={62}>
    <path d="M45 57h8a3 3 0 0 0 3-3V39M56 20V5a3 3 0 0 0-3-3H5a3 3 0 0 0-3 3v49a3 3 0 0 0 3 3h8" />
    <path d="M35 44c5-10 13-20 22-23 3-1 4 0 3 3-3 9-11 18-20 25" fill="#282828" />
    <path d="M17 57c6 0 5-8 11-12 6-3 12 3 11 8-2 9-15 11-22 4Z" fill="#2b62b0" stroke="#8ebbe8" />
  </Icon>
);

const MicIcon = () => (
  <Icon w={40} h={62}>
    <path d="M2 31v2a18 18 0 0 0 36 0v-2M20 51v10" />
    <rect x="9" y="1.500" width="22" height="42" rx="11" fill="#2b62b0" stroke="#8ebbe8" />
  </Icon>
);

const AddInsIcon = () => (
  <Icon w={58} h={58}>
    <g stroke="#d04a25" strokeWidth="2.400">
      <path d="M1.500 1.500h55v55h-55Z" />
      <path d="M6.500 6.500h20v20h-20ZM31.500 6.500h20v20h-20ZM6.500 31.500h20v20h-20ZM31.500 31.500h20v20h-20Z" />
    </g>
  </Icon>
);

const EditorIcon = () => (
  <Icon w={62} h={62}>
    <path d="m35 17h22a5 5 0 0 1 0 10H31ZM29 31h20a5 5 0 0 1 0 10H25ZM22 45h16a5 5 0 0 1 0 10H16Z" fill="#3f7bd0" stroke="none" />
    <path d="M2 60 5 42 38 1l9 7-6 16L17 50Z" fill="#282828" stroke="none" />
    <path d="m2 60 3-18L33 8l9 7-27 38Z" stroke="#3f7bd0" strokeWidth="2.500" strokeLinejoin="round" />
    <path d="m31 10 7-9 10 8-6 9Z" fill="#3f7bd0" stroke="none" />
    <path d="M1 61 3 50l7 6Z" fill="#3f7bd0" stroke="none" />
  </Icon>
);

const ProofIcon = () => (
  <Icon w={32} h={36}>
    <path d="M8 15V5a3 3 0 0 1 3-3h10l9 9v19a3 3 0 0 1-3 3h-8M20.500 2v6.500a3 3 0 0 0 3 3H30" stroke="#fff" strokeWidth="2.200" />
    <circle cx="9" cy="26" r="9" fill="#fff" stroke="none" />
    <path d="m5.500 22.500 7 7m0-7-7 7" stroke="#282828" strokeWidth="2.200" />
  </Icon>
);

const MacroIcon = () => (
  <Icon w={32} h={32}>
    <circle cx="16" cy="16" r="14.500" stroke="#fff" strokeWidth="2.200" />
    <circle cx="16" cy="16" r="9" fill="#fff" stroke="none" />
  </Icon>
);

const FocusIcon = () => (
  <Icon w={26} h={26}>
    <path d="M11.500 1.500h13v13M24 2 2 24M1.500 11.500v13h13" stroke="#fff" strokeWidth="2.200" />
  </Icon>
);

const PrintLayoutIcon = () => (
  <Icon w={24} h={32}>
    <path d="M2 0h11v9.500a1.500 1.500 0 0 0 1.500 1.500H24v19a2 2 0 0 1-2 2H2a2 2 0 0 1-2-2V2a2 2 0 0 1 2-2Zm13 0 9 9h-9Z" fill="#fff" stroke="none" />
    <path d="M4 17h16M4 21.500h16M4 26h16" stroke="#636363" />
  </Icon>
);

const GlobeIcon = () => (
  <Icon w={32} h={32}>
    <g stroke="#fff" strokeWidth="2">
      <circle cx="16" cy="16" r="14.500" />
      <ellipse cx="16" cy="16" rx="6.500" ry="14.500" />
      <path d="M3 10.500h26M3 21.500h26" />
    </g>
  </Icon>
);

const OutlineIcon = () => (
  <Icon w={32} h={24}>
    <path d="M1 2h22M1 12h31M1 22h21" stroke="#fff" strokeWidth="2.200" strokeLinecap="round" />
  </Icon>
);

const DraftIcon = () => (
  <Icon w={34} h={34}>
    <g stroke="#fff" strokeWidth="2.200" strokeLinejoin="round">
      <path d="m2 32 2.500-9L24 3.500a4.200 4.200 0 0 1 6 6L10.500 29.500Zm19-25.500 6 6" />
      <path d="M1 3.500h17M1 9h12M1 14.500h7" />
    </g>
  </Icon>
);

/* ---------- ribbon ---------- */

const TABS = ["Home", "Insert", "Draw", "Design", "Layout", "References", "Mailings", "Review", "View"];

const STYLES = [
  { name: "Caption", sample: "AaBbCcDdEe", className: "text-center text-[21px] font-bold" },
  { name: "Emphasis", sample: "AaBbCcDdEe", className: "text-[24px] italic" },
  { name: "Heading 1", sample: "1.\u00a0 AaBbCcDd", className: "text-[24px]" },
  { name: "Heading 2", sample: "(a)\u00a0 AaBbCcDd", className: "text-[24px]" },
  { name: "Heading 3", sample: "(i)\u00a0 AaBbCcDd", className: "text-[24px]" },
];

function Tool({ label, children, active, className = "" }: { label: string; children: ReactNode; active?: boolean; className?: string }) {
  return (
    <button
      aria-label={label}
      className={`flex h-12 shrink-0 items-center justify-center ${active ? "mx-[2px] w-12 rounded-md bg-[#494949]" : "w-[52px]"} ${className}`}
    >
      {children}
    </button>
  );
}

function Menu({ label }: { label: string }) {
  return (
    <button aria-label={label} className="mr-[2px] flex h-12 w-[22px] shrink-0 items-center justify-center">
      <Chevron />
    </button>
  );
}

const Sep = ({ className = "mx-[14px]" }: { className?: string }) => <span className={`h-9 w-[2px] shrink-0 bg-[#484848] ${className}`} />;
const GroupSep = () => <span className="h-[124px] w-[2px] shrink-0 bg-[#484848]" />;

function BigButton({ label, width, children }: { label: string; width: string; children: ReactNode }) {
  return (
    <button className={`flex shrink-0 flex-col items-center text-center text-[21px] leading-6 font-medium text-[#ececec] ${width}`}>
      <span className="mb-[8px] flex h-[62px] items-center">{children}</span>
      {label}
    </button>
  );
}

function FontGroup() {
  return (
    <div className="ml-[18px] flex w-[624px] flex-col gap-4">
      <div className="flex h-12 items-center">
        <div className="relative mr-[5px]">
          <select aria-label="Font" className="h-12 w-[198px] appearance-none rounded-md border border-[#454545] bg-[#333] pl-3 text-[23px] font-medium text-white">
            <option>Times New...</option>
          </select>
          <Chevron className="absolute top-5 right-2" />
        </div>
        <div className="relative mr-[14px]">
          <select aria-label="Font size" className="h-12 w-[108px] appearance-none rounded-md border border-[#454545] bg-[#333] pl-3 text-[23px] font-medium text-white">
            <option>11</option>
          </select>
          <Chevron className="absolute top-5 right-2" />
        </div>
        <button aria-label="Increase font size"><GrowIcon /></button>
        <button aria-label="Decrease font size" className="ml-6"><GrowIcon down /></button>
        <Sep className="mx-[22px]" />
        <button className="flex items-center gap-[14px] text-[26px] font-light text-[#d6d6d6]">
          Aa
          <Chevron />
        </button>
        <Sep className="mx-[22px]" />
        <button aria-label="Clear formatting"><ClearFormatIcon /></button>
      </div>
      <div className="flex h-12 items-center text-[26px] text-[#d6d6d6]">
        <Tool label="Bold"><span className="font-bold">B</span></Tool>
        <Tool label="Italic"><span className="font-['Liberation_Serif',serif] text-[30px] italic">I</span></Tool>
        <Tool label="Underline"><span className="underline decoration-2 underline-offset-[6px]">U</span></Tool>
        <Menu label="Underline styles" />
        <Tool label="Strikethrough"><StrikeIcon /></Tool>
        <Tool label="Subscript"><span>x<sub className="text-[14px] text-[#5297dc]">2</sub></span></Tool>
        <Tool label="Superscript"><span>x<sup className="text-[14px] text-[#5297dc]">2</sup></span></Tool>
        <Sep className="mr-[14px] ml-[8px]" />
        <Tool label="Text effects"><TextEffectsIcon /></Tool>
        <Menu label="Text effects menu" />
        <Tool label="Highlight"><HighlightIcon /></Tool>
        <Menu label="Highlight colors" />
        <Tool label="Font color"><FontColorIcon /></Tool>
        <Menu label="Font colors" />
      </div>
    </div>
  );
}

function ParagraphGroup() {
  return (
    <div className="ml-4 flex w-[680px] flex-col gap-4">
      <div className="flex h-12 items-center">
        <Tool label="Bullets"><BulletsIcon /></Tool>
        <Menu label="Bullet library" />
        <Tool label="Numbering"><NumberedIcon /></Tool>
        <Menu label="Numbering library" />
        <Tool label="Multilevel list"><MultilevelIcon /></Tool>
        <Menu label="List library" />
        <Sep />
        <Tool label="Decrease indent"><IndentIcon /></Tool>
        <Tool label="Increase indent"><IndentIcon right /></Tool>
        <Sep />
        <Tool label="Left to right" active><DirectionIcon /></Tool>
        <Tool label="Right to left"><DirectionIcon rtl /></Tool>
        <Sep />
        <Tool label="Sort"><SortIcon /></Tool>
        <Sep />
        <Tool label="Show marks"><PilcrowIcon /></Tool>
      </div>
      <div className="flex h-12 items-center">
        <Tool label="Align left"><Lines rows={[[0, 28], [0, 19], [0, 28], [0, 19]]} /></Tool>
        <Tool label="Center"><Lines rows={[[0, 28], [5, 23], [0, 28], [5, 23]]} /></Tool>
        <Tool label="Align right"><Lines rows={[[0, 28], [9, 28], [0, 28], [9, 28]]} /></Tool>
        <Tool label="Justify"><Lines rows={[[0, 28], [0, 28], [0, 28], [0, 28]]} /></Tool>
        <Menu label="Justify options" />
        <Sep />
        <Tool label="Line spacing"><LineSpacingIcon /></Tool>
        <Menu label="Line spacing options" />
        <Sep />
        <Tool label="Shading"><FillIcon /></Tool>
        <Menu label="Shading colors" />
        <Tool label="Borders"><BordersIcon /></Tool>
        <Menu label="Border options" />
      </div>
    </div>
  );
}

function TitleBar() {
  return (
    <div className="grid h-20 grid-cols-[1fr_auto_1fr] items-center px-[23px]">
      <div className="flex items-center pl-[19px]">
        <label className="flex items-center gap-[20px] text-[22px] font-medium text-[#d8d8d8]">
          AutoSave
          <input
            type="checkbox"
            className="flex h-[28px] w-[56px] appearance-none items-center rounded-full bg-[#1b1b1b] before:block before:h-6 before:w-6 before:rounded-full before:bg-white before:content-['']"
          />
        </label>
        <button aria-label="Home" className="ml-6"><HomeIcon /></button>
        <button aria-label="Save" className="ml-6"><SaveIcon /></button>
        <button aria-label="Undo" className="ml-6 flex items-center gap-[18px]">
          <UndoIcon />
          <Chevron color="#6e6e6e" />
        </button>
        <button aria-label="Redo" className="ml-[22px]"><RedoIcon /></button>
        <button aria-label="Print" className="ml-[22px]"><PrintIcon /></button>
        <button aria-label="More" className="ml-[22px]"><DotsIcon /></button>
      </div>
      <button className="flex items-center text-[23px] font-semibold text-white">
        <WordDocIcon />
        <span className="ml-[10px]">Postmoney Safe - Valuation Cap Only</span>
        <span className="ml-2 font-medium text-[#b9b9b9]">— Saved to my Mac</span>
        <Icon w={18} h={12} className="ml-[6px]">
          <path d="m2 2 7 7 7-7" stroke="#a0a0a0" strokeWidth="2.400" />
        </Icon>
      </button>
      <div className="flex items-center justify-end gap-[27px]">
        <label className="flex h-11 w-[560px] items-center gap-4 rounded-lg border-2 border-[#343434] px-[11px]">
          <SearchIcon />
          <input aria-label="Search" placeholder="Search (Cmd + Ctrl + U)" className="flex-1 bg-transparent text-[24px] font-semibold outline-none placeholder:text-[#9b9b9b]" />
        </label>
        <button aria-label="Account"><PersonIcon /></button>
      </div>
    </div>
  );
}

function TabBar() {
  return (
    <div className="flex h-[52px] items-start justify-between pr-5 pl-[22px]">
      <nav className="flex gap-12 pt-[9px] text-[26px] leading-8 font-medium text-[#dedede]">
        {TABS.map((tab, i) => (
          <a key={tab} href={`#${tab}`} className={i === 0 ? "border-b-[6px] border-[#dedede] pb-[5px] font-bold" : ""}>
            {tab}
          </a>
        ))}
      </nav>
      <div className="flex gap-5 pt-1 text-[25px] font-medium text-white">
        <button className="flex h-12 items-center gap-[11px] rounded-xl border border-[#474747] bg-[#535353] px-4">
          <CommentIcon />
          Comments
        </button>
        <button className="flex h-12 items-center gap-[10px] rounded-xl border border-[#474747] bg-[#535353] pr-3 pl-[18px]">
          <PencilIcon />
          Editing
          <Icon w={18} h={12} className="ml-[6px]"><path d="m2 2 7 7 7-7" stroke="#fff" strokeWidth="2.200" /></Icon>
        </button>
        <button className="flex h-12 items-center gap-[9px] rounded-xl bg-[#3a6de0] pr-[13px] pl-5">
          <ShareIcon />
          Share
          <Icon w={18} h={12} className="ml-[6px]"><path d="m2 2 7 7 7-7" stroke="#fff" strokeWidth="2.200" /></Icon>
        </button>
      </div>
    </div>
  );
}

function Ribbon() {
  return (
    <div className="flex h-[152px] items-start pt-[22px] pr-[30px]">
      <div className="flex w-[185px] shrink-0 pl-[32px]">
        <button className="flex w-[70px] flex-col text-[21px] leading-6 font-medium text-[#ececec]">
          <span className="mb-[8px] flex h-[62px] items-center gap-[10px]">
            <PasteIcon />
            <Chevron />
          </span>
          <span className="ml-[6px]">Paste</span>
        </button>
        <div className="-mt-1 ml-[23px] flex flex-col items-center gap-[10px]">
          <button aria-label="Cut"><CutIcon /></button>
          <button aria-label="Copy"><CopyIcon /></button>
          <button aria-label="Format painter"><BrushIcon /></button>
        </div>
      </div>
      <GroupSep />
      <FontGroup />
      <GroupSep />
      <ParagraphGroup />
      <GroupSep />
      <div className="-mt-2 ml-5 flex h-[116px] flex-1 items-center gap-[22px] rounded-md border border-[#505050] bg-[#3d3d3d] pr-[10px] pl-[46px]">
        {STYLES.map((s) => (
          <button key={s.name} className="flex h-[91px] w-[138px] flex-col overflow-hidden rounded-[4px] bg-white text-black">
            <span className="h-[61px] w-full px-[6px] pt-[3px]">
              <span className={`block overflow-hidden text-left font-['Liberation_Serif',serif] leading-[58px] whitespace-nowrap ${s.className}`}>{s.sample}</span>
            </span>
            <span className="h-[30px] w-full border-t border-[#d8d8d8] bg-[#ececec] text-[19px] leading-[26px]">{s.name}</span>
          </button>
        ))}
        <button aria-label="More styles" className="ml-auto">
          <Icon w={10} h={14}><path d="m2 2 5 5-5 5" stroke="#fff" strokeWidth="2.600" /></Icon>
        </button>
      </div>
      <div className="mr-4"><BigButton label="Styles Pane" width="w-20"><StylesPaneIcon /></BigButton></div>
      <GroupSep />
      <BigButton label="Dictate" width="w-[122px]"><MicIcon /></BigButton>
      <GroupSep />
      <BigButton label="Add-ins" width="w-[126px]"><AddInsIcon /></BigButton>
      <GroupSep />
      <BigButton label="Editor" width="w-[114px]"><EditorIcon /></BigButton>
      <span className="w-[27px]" />
    </div>
  );
}

/* ---------- rulers ---------- */

const CM = 26.62;

function ticks(from: number, to: number) {
  const out: { pos: number; tall: boolean }[] = [];
  for (let q = from * 4; q <= to * 4; q++) out.push({ pos: (q * CM) / 4, tall: Math.abs(q % 4) === 2 });
  return out;
}

function HorizontalRuler() {
  // origin of the scale sits 68px into the drawing
  const zero = 68;
  return (
    <div className="flex h-8 bg-[#454545]">
      <div className="flex w-8 shrink-0 items-center border-r-2 border-b-2 border-[#999] pl-[6px]">
        <Icon w={18} h={22}><path d="M3 22V6h12M10 1l5 5-5 5" stroke="#fff" strokeWidth="2.200" /></Icon>
      </div>
      <div className="flex-1 border-b-2 border-[#999] pl-[577px]">
        <svg width="577" height="41" className="relative" fontFamily="'Open Sans', sans-serif" fontSize="19" fill="#e4e4e4" textAnchor="middle">
          <path d="M0 0h69v32H0zM524 0h53v32h-53z" fill="#232323" />
          {ticks(-2.5, 19).map(({ pos, tall }, i) => (
            <path key={i} d={`M${Math.round(zero + pos)} ${tall ? 12 : 22}V30`} stroke="#999" strokeWidth="2" />
          ))}
          <text x="15" y="16">2</text>
          <text x="42" y="16">1</text>
          {Array.from({ length: 18 }, (_, i) => (
            <text key={i} x={zero + (i + 1) * CM} y="16">{i + 1}</text>
          ))}
          <text x="569" y="16">1</text>
          {Array.from({ length: 13 }, (_, i) => (
            <path key={i} d={`M${Math.round(102 + i * 33.85)} 32v6`} stroke="#8a8a8a" strokeWidth="2" />
          ))}
          <g fill="#e0e0e0">
            <path d="M59 0h18v3l-9 8-9-8z" />
            <path d="M25 28v-5l9-8 9 8v5zM25 30h18v9q0 2-2 2H27q-2 0-2-2z" />
            <path d="M533 28v-5l9-8 9 8v5z" />
          </g>
          <path d="M86 32V17h10M91 12l6 5-6 5" stroke="#fff" strokeWidth="2" fill="none" />
        </svg>
      </div>
    </div>
  );
}

function VerticalRuler() {
  const zero = 813;
  return (
    <div className="w-8 shrink-0 self-stretch overflow-hidden border-r-2 border-[#999] bg-[#454545]">
      <svg width="32" height="1464" fontFamily="'Open Sans', sans-serif" fontSize="19" fill="#e4e4e4" textAnchor="middle">
        <path d="M0 753h32v60H0z" fill="#232323" />
        {ticks(-2.25, 24.25).map(({ pos, tall }, i) => (
          <path key={i} d={`M${tall ? 12 : 22} ${Math.round(zero + pos)}H30`} stroke="#999" strokeWidth="2" />
        ))}
        {[-2, -1, ...Array.from({ length: 24 }, (_, i) => i + 1)].map((n) => (
          <text key={n} transform={`translate(16 ${zero + n * CM}) rotate(-90)`}>{Math.abs(n)}</text>
        ))}
      </svg>
    </div>
  );
}

function StatusBar() {
  return (
    <div className="flex h-14 shrink-0 items-center justify-between border-t-2 border-black pr-[50px] pl-[48px] text-[24px] text-[#f0f0f0]">
      <div className="flex items-center gap-10">
        <button>Page 5 of 7</button>
        <button>21 of 3529 words</button>
        <button aria-label="Proofing errors"><ProofIcon /></button>
        <button>English (United States)</button>
        <button aria-label="Record macro"><MacroIcon /></button>
      </div>
      <div className="flex items-center">
        <button className="flex items-center gap-[22px]">
          <FocusIcon />
          Focus
        </button>
        <button aria-label="Print layout" className="ml-[26px] flex h-11 w-[62px] items-center justify-center rounded-md bg-[#636363]"><PrintLayoutIcon /></button>
        <button aria-label="Web layout" className="ml-[26px]"><GlobeIcon /></button>
        <button aria-label="Outline" className="ml-10"><OutlineIcon /></button>
        <button aria-label="Draft" className="ml-10"><DraftIcon /></button>
        <button aria-label="Zoom out" className="ml-[32px]"><Icon w={18} h={18}><path d="M1 9h16" stroke="#fff" /></Icon></button>
        <span className="relative ml-[13px] flex items-center">
          <input
            type="range"
            aria-label="Zoom"
            min="0"
            max="100"
            defaultValue="20"
            className="h-[9px] w-[200px] appearance-none rounded-full bg-[#656565] [&::-webkit-slider-thumb]:size-8 [&::-webkit-slider-thumb]:appearance-none [&::-webkit-slider-thumb]:rounded-full [&::-webkit-slider-thumb]:bg-[#959595]"
          />
          <span className="absolute left-[97px] size-[6px] rounded-full bg-[#282828]" />
        </span>
        <button aria-label="Zoom in" className="ml-[13px]"><Icon w={18} h={18}><path d="M1 9h16M9 1v16" stroke="#fff" /></Icon></button>
        <button className="ml-8">47%</button>
      </div>
    </div>
  );
}

export default function App() {
  return (
    <div className="flex h-screen flex-col overflow-hidden border-t-2 border-black bg-[#282828] font-[Inter,sans-serif]">
      <div className="border-b-2 border-black">
        <TitleBar />
        <TabBar />
        <Ribbon />
      </div>
      <HorizontalRuler />
      <div className="flex min-h-0 flex-1">
        <VerticalRuler />
        <main className="mt-3 flex-1 overflow-hidden pl-3">
          <div className="-mt-[21px] flex flex-wrap justify-center gap-3 px-[240px]">
            <Page
              blocks={PAGE_1}
              footer={
                <div className="text-left text-[8px] leading-[10px] whitespace-nowrap text-[#a0a0a0]">
                  <p>
                    © 2023 Y Combinator Management, LLC.&nbsp; This form is made available under a Creative Commons Attribution-
                    <span className="underline decoration-red-600 decoration-wavy decoration-2 underline-offset-0">NoDerivatives</span> 4.0 License
                  </p>
                  <p>
                    (International): <a href="https://creativecommons.org/licenses/by-nd/4.0/legalcode" className="text-[#7d9fe0] underline">https://creativecommons.org/licenses/by-nd/4.0/legalcode</a>.&nbsp; You may modify this form so you can use it in transactions, but please do
                  </p>
                  <p>not publicly disseminate a modified version of the form without asking us first.</p>
                </div>
              }
            />
            <Page blocks={PAGE_2} footer="-2-" />
            <Page blocks={PAGE_3} footer="-3-" />
            <Page blocks={PAGE_4} footer="-4-" />
            <Page blocks={PAGE_5} />
            <Page blocks={PAGE_6} />
            <SignaturePage />
          </div>
        </main>
      </div>
      <StatusBar />
    </div>
  );
}
